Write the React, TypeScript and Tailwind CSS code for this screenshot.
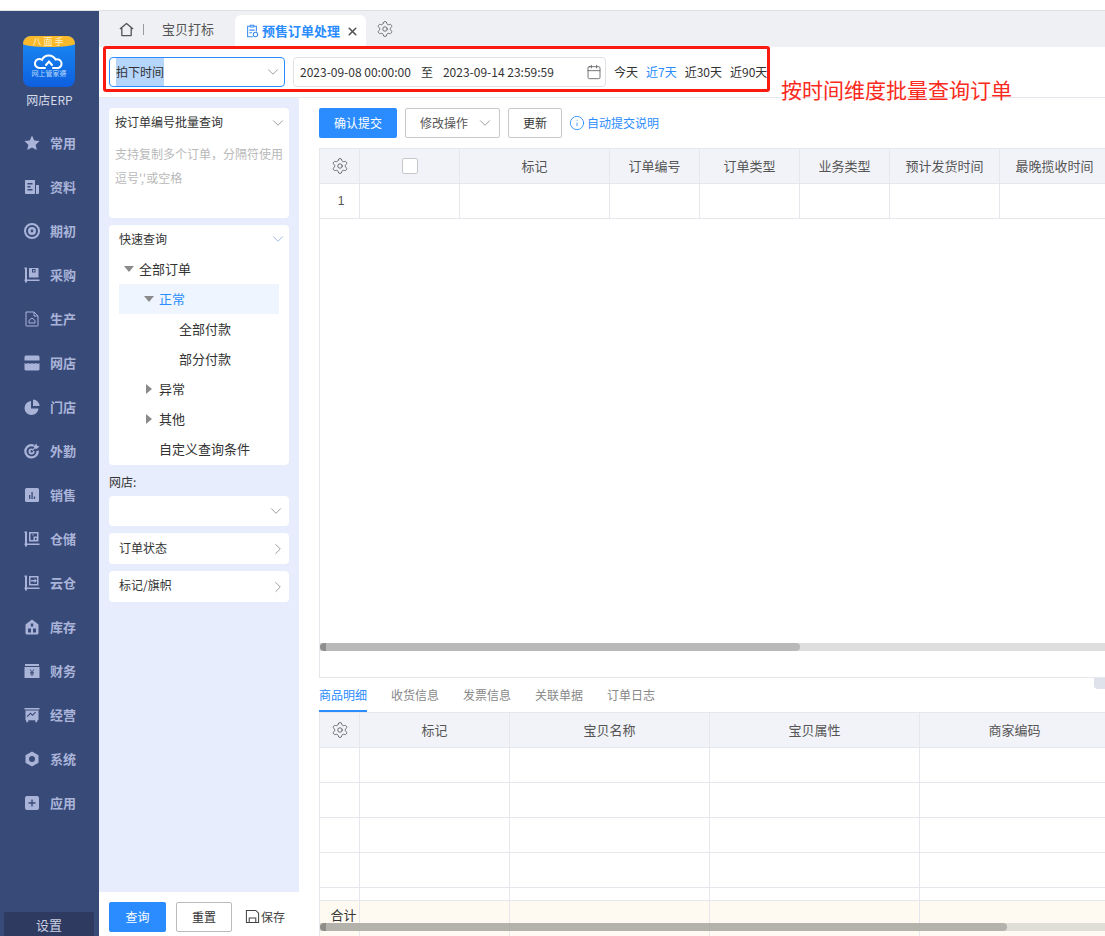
import { Calendar, ChevronDown, ChevronLeft, ChevronRight, Info, Settings, X } from 'lucide-react'
import type { ReactNode } from 'react'

const font = "font-['Microsoft_YaHei','Noto_Sans_CJK_SC','Liberation_Sans',sans-serif]"

const navIcons: Record<string, ReactNode> = {
  常用: <path d="M8 .5l2.3 4.9 5.3.7-3.9 3.6 1 5.3L8 12.4 3.300 15l1-5.300L.4 6.100l5.300-.7z" />,
  资料: <path fillRule="evenodd" d="M1 1h10v14H2a1 1 0 0 1-1-1zm2.500 3v1.500h5V4zm0 3v1.500h3V7zm0 3v1.500h5V10zM12 6h2.500a.5.5 0 0 1 .5.5V14a1 1 0 0 1-1 1h-2z" />,
  期初: <path fillRule="evenodd" d="M8 0a8 8 0 1 1 0 16A8 8 0 0 1 8 0zm0 2a6 6 0 1 0 0 12A6 6 0 0 0 8 2zm0 2a4 4 0 1 1 0 8 4 4 0 0 1 0-8zm0 2.600a1.400 1.400 0 1 0 0 2.800 1.400 1.400 0 0 0 0-2.800z" />,
  采购: <path fillRule="evenodd" d="M1 .5h2v12h12.500v1.500H3v1.500H1V14H.5v-1.500H1V2H.5V.5zM5 1h9.500v9.500H5zm3 1v3.500h3.500V2zm1 1v1.500h1.500V3z" />,
  生产: <path fill="none" stroke="currentColor" strokeWidth="1" d="M2 1h8l4 4v9.500a.5.5 0 0 1-.5.5h-11a.5.5 0 0 1-.5-.5zM10 1v4h4M5 9.500 8 7l3 2.500V12H5z" />,
  网店: <path fillRule="evenodd" d="M2 .5h12a1.500 1.500 0 0 1 1.500 1.500v3.500H.5V2A1.500 1.500 0 0 1 2 .5zM.5 8q1.900 1.500 3.750 0 1.900 1.500 3.750 0 1.900 1.500 3.750 0 1.900 1.500 3.750 0v6a1.500 1.500 0 0 1-1.500 1.500H2A1.500 1.500 0 0 1 .5 14z" />,
  门店: <path d="M7 2v7.500h7.500A7 7 0 1 1 7 2zM9 .5A6.500 6.500 0 0 1 15.500 7H9z" />,
  外勤: <path fillRule="evenodd" d="M7.500 1a7 7 0 0 1 2.500.5l-.4 2.200A5 5 0 1 0 12.500 8l2.300-.4A7.300 7.300 0 1 1 7.500 1zm0 4.500q.5 0 1 .2L8 7a1.300 1.300 0 1 0 1.100 1.200l1.300-.5a3 3 0 1 1-2.900-2.200zM12.500.5 13 2.800l2.500.4-2.700 2.700-1.900-.3-2.300 2.300-.8-.8 2.300-2.300-.3-1.900z" />,
  销售: <path fillRule="evenodd" d="M2.500 1h11A1.500 1.500 0 0 1 15 2.500v11a1.500 1.500 0 0 1-1.500 1.500h-11A1.500 1.500 0 0 1 1 13.500v-11A1.500 1.500 0 0 1 2.500 1zM5 8v4h1.300V8zm2.400-3v7h1.300V5zm2.400 4.500V12h1.300V9.500z" />,
  仓储: <path fillRule="evenodd" d="M1 .5h2v12h12.500v1.500H3v1.500H1V14H.5v-1.500H1V2H.5V.5zM5 1h9.500v9.500H5zm1.500 1.500v6.500h3V5.500h3.500v-3zm4.500 4.500v2h1.500V7zM8 3.500v.8h2v-.8z" />,
  云仓: <path fillRule="evenodd" d="M1 .5h2v12h12.500v1.500H3v1.500H1V14H.5v-1.500H1V2H.5V.5zM5 1h9.500v9.500H5zm1.500 1.500v6.500h6.500V2.500zm.5 2.500h3.500V3.500L13 5.700 10.500 8V6.400H7z" />,
  库存: <path fillRule="evenodd" d="M8 .5l6.500 5V14a1.500 1.500 0 0 1-1.500 1.500H3A1.500 1.500 0 0 1 1.500 14V5.500zM6.800 4.500v3h2.400v-3zm-2.800 5v4h3v-4zm5 0v4h3v-4z" />,
  财务: <path fillRule="evenodd" d="M1 1h14v2H1zM.5 4h15v11H.5zm5 2.500L7.400 9H6v.8h1.500v.7H6v.8h1.500V13h1v-1.700H10v-.8H8.500v-.7H10V9H8.600l1.900-2.500h-1L8 8.500 6.500 6.500z" />,
  经营: <path fillRule="evenodd" d="M.5 1h15v1.500H.5zM1.500 3.500h13V13l-1 .2-.5 2h-1.500l-.4-2H4.400l-.4 2H2.500l-.5-2-.5-.2zM3.500 10l3-3 2 2 3.500-3.500-.8-.8L8.500 7.500l-2-2-3.800 3.800z" />,
  系统: <path fillRule="evenodd" d="M8 .5l6.500 3.700v7.600L8 15.500l-6.500-3.700V4.200zM8 5a3 3 0 1 0 0 6 3 3 0 0 0 0-6z" />,
  应用: <path fillRule="evenodd" d="M3 1h10a2 2 0 0 1 2 2v10a2 2 0 0 1-2 2H3a2 2 0 0 1-2-2V3a2 2 0 0 1 2-2zm4.300 3.500v2.800H4.500v1.400h2.800v2.800h1.400V8.700h2.800V7.300H8.700V4.500z" />,
}

const navItems = Object.keys(navIcons)

function Sidebar() {
  return (
    <aside className="w-[99px] flex-shrink-0 bg-[#384a78] flex flex-col items-center pt-[25px] relative">
      <div className="w-[52px] h-[51px] self-start ml-[23px] rounded-[8px] overflow-hidden bg-gradient-to-b from-[#1d8cf5] to-[#0f5fe0] flex flex-col items-center relative">
        <div className="w-full h-[11px] bg-[#f9b92b] rounded-b-[50%_30%] text-[9px] leading-[11px] tracking-[2px] text-center text-[#fff3cf]">八面手</div>
        <svg viewBox="0 0 30 15" className="w-[30px] h-[15px] mt-[7px]" fill="none" stroke="white" strokeWidth="2" strokeLinecap="round">
          <path d="M11 14H5.500a4.500 4.500 0 1 1 2.500-8.200A7.500 7.500 0 0 1 21.500 5.500 4.500 4.500 0 1 1 24.500 14H19" />
          <path d="M12 11l3-3.500 3 3.500" />
        </svg>
        <span className="text-[7px] leading-[9px] text-[#b8d6fb] whitespace-nowrap">网上管家婆</span>
      </div>
      <div className="text-[12px] leading-[16px] mt-[5px] text-[#d7dbe8]">网店ERP</div>
      <nav className="flex flex-col mt-[13px] w-full">
        {navItems.map(name => (
          <div key={name} className="h-[44px] flex items-center pl-[24px] gap-[10px] text-[#aab4d8]">
            <svg viewBox="0 0 16 16" fill="currentColor" className="w-[16px] h-[16px] flex-shrink-0">{navIcons[name]}</svg>
            <span className="text-[13px] font-bold leading-[16px]">{name}</span>
          </div>
        ))}
      </nav>
      <div className="mt-auto self-start ml-[4px] w-[90px] h-[24px] rounded-t-[2px] bg-[#2e3a60] text-[#c9cfe2] text-[13px] leading-[26px] text-center">设置</div>
    </aside>
  )
}

function Tabs() {
  return (
    <div className="h-[36px] bg-[#eff0f4] flex items-end pl-[20px] flex-shrink-0">
      <div className="flex items-center h-[35px] pb-[1px] text-[#666]">
        <svg viewBox="0 0 16 16" className="w-[15px] h-[15px]" fill="none" stroke="#555" strokeWidth="1.400" strokeLinejoin="round"><path d="M1 7.500 8 1.500l7 6M3 6v8.500h10V6" /></svg>
        <span className="w-px h-[11px] bg-[#999] ml-[9px]" />
        <span className="text-[13px] ml-[18px] text-[#555]">宝贝打标</span>
      </div>
      <div className="ml-[21px] w-[131px] h-[32px] bg-white rounded-t-[6px] flex items-center pl-[10px]">
        <svg viewBox="0 0 16 16" className="w-[14px] h-[14px]" fill="none" stroke="#3a8bef" strokeWidth="1.200">
          <path d="M6 1.500h4v2H6zM6 2.500H3v12h6M10 2.500h3v6M5 7h6M5 10h3" />
          <circle cx="12" cy="12" r="2.500" />
        </svg>
        <span className="text-[13px] font-bold text-[#2a8cff] ml-[3px] whitespace-nowrap">预售订单处理</span>
        <X className="w-[13px] h-[13px] ml-[6px] text-[#555]" strokeWidth={3} />
      </div>
      <Settings className="w-[18px] h-[18px] ml-[10px] mb-[9px] text-[#666]" strokeWidth={1.200} />
    </div>
  )
}

function FilterBar() {
  return (
    <div className="h-[51px] flex-shrink-0 bg-white border-b border-[#e6e7ec] flex items-center pl-[10px] text-[12px] text-[#333]">
      <div className="w-[176px] h-[30px] border border-[#2a8cff] rounded-[4px] flex items-center pl-[6px]">
        <span className="bg-[#b5d5fb] leading-[28px] w-[48px] whitespace-nowrap">拍下时间</span>
        <ChevronDown className="w-[18px] h-[18px] ml-auto mr-[2px] text-[#888]" strokeWidth={1.100} />
      </div>
      <div className="w-[313px] h-[30px] ml-[8px] border border-[#dfe1e6] rounded-[4px] flex items-center pl-[6px] whitespace-nowrap">
        <span>2023-09-08 00:00:00</span>
        <span className="ml-[10px]">至</span>
        <span className="ml-[10px]">2023-09-14 23:59:59</span>
        <Calendar className="w-[16px] h-[16px] ml-auto mr-[3px] text-[#555]" strokeWidth={1.200} />
      </div>
      <div className="flex gap-[8px] ml-[8px] whitespace-nowrap">
        <span>今天</span>
        <span className="text-[#2a8cff]">近7天</span>
        <span>近30天</span>
        <span>近90天</span>
      </div>
    </div>
  )
}

function Caret({ open }: { open: boolean }) {
  return (
    <span className={open
      ? 'w-0 h-0 border-l-[5px] border-r-[5px] border-t-[6px] border-l-transparent border-r-transparent border-t-[#8a8a8a]'
      : 'w-0 h-0 ml-[2px] border-t-[5px] border-b-[5px] border-l-[6px] border-t-transparent border-b-transparent border-l-[#8a8a8a]'} />
  )
}

function TreeRow({ label, pad, caret, active }: { label: string; pad: string; caret?: 'open' | 'closed'; active?: boolean }) {
  return (
    <div className={`h-[30px] flex items-center text-[13px] mx-[10px] ${pad} ${active ? 'bg-[#eff5fe] text-[#2a8cff]' : 'text-[#333]'}`}>
      {caret ? <span className="w-[15px] flex-shrink-0 flex justify-start"><Caret open={caret === 'open'} /></span> : null}
      <span className="whitespace-nowrap">{label}</span>
    </div>
  )
}

function LeftPanel() {
  return (
    <div className="w-[200px] flex-shrink-0 flex flex-col bg-[#e8edfd] relative text-[12px] text-[#333]">
      <div className="flex-1 px-[10px] pt-[10px]">
        <div className="h-[110px] bg-white rounded-[4px] pl-[6px] pr-[2px]">
          <div className="h-[29px] flex items-center justify-between">
            <span className="pb-[2px]">按订单编号批量查询</span>
            <ChevronDown className="w-[18px] h-[18px] text-[#888]" strokeWidth={1.100} />
          </div>
          <p className="text-[#b9b9b9] leading-[24px] mt-[5px] pr-[4px]">支持复制多个订单，分隔符使用逗号','或空格</p>
        </div>
        <div className="h-[240px] mt-[7px] bg-white rounded-[4px] overflow-hidden">
          <div className="h-[29px] flex items-center justify-between pl-[10px] pr-[2px] pb-[1px]">
            <span>快速查询</span>
            <ChevronDown className="w-[18px] h-[18px] text-[#8fa8e8]" strokeWidth={1.100} />
          </div>
          <div>
            <TreeRow label="全部订单" pad="pl-[5px]" caret="open" />
            <TreeRow label="正常" pad="pl-[25px]" caret="open" active />
            <TreeRow label="全部付款" pad="pl-[60px]" />
            <TreeRow label="部分付款" pad="pl-[60px]" />
            <TreeRow label="异常" pad="pl-[25px]" caret="closed" />
            <TreeRow label="其他" pad="pl-[25px]" caret="closed" />
            <TreeRow label="自定义查询条件" pad="pl-[40px]" />
          </div>
        </div>
        <div className="mt-[10px] leading-[16px] -translate-y-px">网店:</div>
        <div className="h-[30px] mt-[5px] bg-white rounded-[4px] flex items-center justify-end pr-[4px]">
          <ChevronDown className="w-[18px] h-[18px] text-[#888]" strokeWidth={1.100} />
        </div>
        <div className="h-[31px] mt-[7px] bg-white rounded-[4px] flex items-center justify-between pl-[10px] pr-[2px]">
          <span className="pb-[2px]">订单状态</span>
          <ChevronRight className="w-[18px] h-[18px] text-[#888]" strokeWidth={1.100} />
        </div>
        <div className="h-[31px] mt-[7px] bg-white rounded-[4px] flex items-center justify-between pl-[10px] pr-[2px]">
          <span className="pb-[3px]">标记/旗帜</span>
          <ChevronRight className="w-[18px] h-[18px] text-[#888]" strokeWidth={1.100} />
        </div>
      </div>
      <div className="h-[44px] flex-shrink-0 bg-white flex items-start pt-[10px] pl-[10px]">
        <button className="w-[57px] h-[30px] rounded-[2px] bg-[#2a8cff] text-white">查询</button>
        <button className="w-[56px] h-[30px] ml-[10px] rounded-[2px] border border-[#bbb] bg-white">重置</button>
        <svg viewBox="0 0 16 16" className="w-[15px] h-[15px] ml-[13px] mt-[7px]" fill="none" stroke="#444" strokeWidth="1.100">
          <path d="M1.500 1.500h10l3 3v10h-13zM4.500 14.500v-5h7v5" />
        </svg>
        <span className="mt-[6px] ml-[1px] text-[#444] whitespace-nowrap">保存</span>
      </div>
      <div className="absolute left-[200px] top-[403px] w-[10px] h-[40px] bg-[#dfe2ea] rounded-r-[2px] flex items-center justify-center">
        <ChevronLeft className="w-[10px] h-[10px] text-[#666]" strokeWidth={2} />
      </div>
    </div>
  )
}

function GridRow({ widths, cells, header, foot, h = 'h-[35px]' }: { widths: string[]; cells?: ReactNode[]; header?: boolean; foot?: boolean; h?: string }) {
  return (
    <div className={`flex flex-shrink-0 border-b border-[#e6e7ec] ${h} ${header ? 'bg-[#f2f3f9] text-[#555]' : foot ? 'bg-[#fefaf2] text-[#333]' : 'bg-white text-[#555]'}`}>
      {widths.map((w, i) => (
        <div key={i} className={`${w} flex-shrink-0 border-r border-[#e6e7ec] flex items-center justify-center text-[13px] whitespace-nowrap`}>
          {cells?.[i]}
        </div>
      ))}
    </div>
  )
}

const gear = <Settings className="w-[18px] h-[18px] text-[#555]" strokeWidth={1.100} />

const topCols = ['w-[40px]', 'w-[100px]', 'w-[150px]', 'w-[90px]', 'w-[100px]', 'w-[90px]', 'w-[110px]', 'w-[110px]']
const bottomCols = ['w-[40px]', 'w-[150px]', 'w-[200px]', 'w-[210px]', 'w-[190px]']

function Content() {
  return (
    <div className="flex-1 min-w-0 bg-white flex flex-col pl-[20px] pt-[10px] overflow-hidden relative">
      <div className="flex items-center h-[30px] flex-shrink-0 text-[12px] text-[#333]">
        <button className="w-[78px] h-[30px] rounded-[2px] bg-[#2a8cff] text-white">确认提交</button>
        <div className="w-[95px] h-[30px] ml-[8px] border border-[#c9c9c9] rounded-[2px] flex items-center pl-[14px] text-[#555]">
          修改操作
          <ChevronDown className="w-[18px] h-[18px] ml-[8px] text-[#888]" strokeWidth={1.100} />
        </div>
        <div className="w-[54px] h-[30px] ml-[8px] border border-[#c9c9c9] rounded-[2px] flex items-center justify-center">更新</div>
        <Info className="w-[16px] h-[16px] ml-[7px] text-[#2a8cff]" strokeWidth={1.300} />
        <span className="ml-[2px] text-[#2a8cff]">自动提交说明</span>
      </div>
      <div className="h-[530px] mt-[10px] flex-shrink-0 border-l border-t border-b border-[#e6e7ec] flex flex-col">
        <GridRow
          header
          widths={topCols}
          cells={[gear, <span className="w-[16px] h-[16px] border border-[#c8c8c8] rounded-[2px] bg-white" />, '标记', '订单编号', '订单类型', '业务类型', '预计发货时间', '最晚揽收时间']}
        />
        <GridRow widths={topCols} cells={[<span className="ml-[3px] text-[12px] font-['Liberation_Sans',sans-serif]">1</span>]} />
        <div className="mt-auto mb-[26px] h-[8px] bg-[#dedede] flex">
          <div className="w-[480px] h-full bg-[#b9b9b9] rounded-[4px] flex-shrink-0 border-l-[6px] border-[#8e8e8e]" />
        </div>
      </div>
      <div className="h-[34px] flex-shrink-0 flex gap-[24px] items-start pt-[8px] text-[12px] text-[#888]">
        <span className="h-[26px] border-b-2 border-[#2a8cff] text-[#2a8cff]">商品明细</span>
        <span>收货信息</span>
        <span>发票信息</span>
        <span>关联单据</span>
        <span>订单日志</span>
      </div>
      <div className="flex-1 min-h-0 border-l border-t border-[#e6e7ec] flex flex-col relative">
        <GridRow header widths={bottomCols} cells={[gear, '标记', '宝贝名称', '宝贝属性', '商家编码']} />
        <GridRow widths={bottomCols} />
        <GridRow widths={bottomCols} />
        <GridRow widths={bottomCols} />
        <GridRow widths={bottomCols} />
        <GridRow widths={bottomCols} h="h-[13px]" />
        <GridRow foot widths={bottomCols} h="h-[36px]" cells={[<span className="mb-[8px] ml-[8px]">合计</span>]} />
        <div className="absolute left-0 right-0 top-[210px] h-[8px] bg-[#d6d6ce]/80 flex">
          <div className="w-[687px] h-full bg-[#a8a8a0]/80 rounded-[4px] flex-shrink-0 border-l-[6px] border-[#8e8e88]" />
        </div>
      </div>
      <div className="absolute right-0 top-[580px] w-[11px] h-[11px] bg-[#dfe2ea] rounded-bl-[4px]" />
    </div>
  )
}

export default function App() {
  return (
    <div className={`w-[1105px] h-[936px] overflow-hidden bg-white flex flex-col relative ${font}`}>
      <div className="h-[11px] flex-shrink-0 border-b border-[#dfe0e4]" />
      <div className="flex-1 min-h-0 flex">
        <Sidebar />
        <div className="flex-1 min-w-0 flex flex-col">
          <Tabs />
          <FilterBar />
          <div className="flex-1 min-h-0 flex">
            <LeftPanel />
            <Content />
          </div>
        </div>
      </div>
      <div className="absolute left-[103px] top-[46px] w-[667px] h-[46px] border-[3px] border-[#fb1a10] rounded-[3px] pointer-events-none" />
      <div className="absolute left-[781px] top-[75px] text-[21px] leading-[28px] text-[#fb2a20] whitespace-nowrap">按时间维度批量查询订单</div>
    </div>
  )
}
